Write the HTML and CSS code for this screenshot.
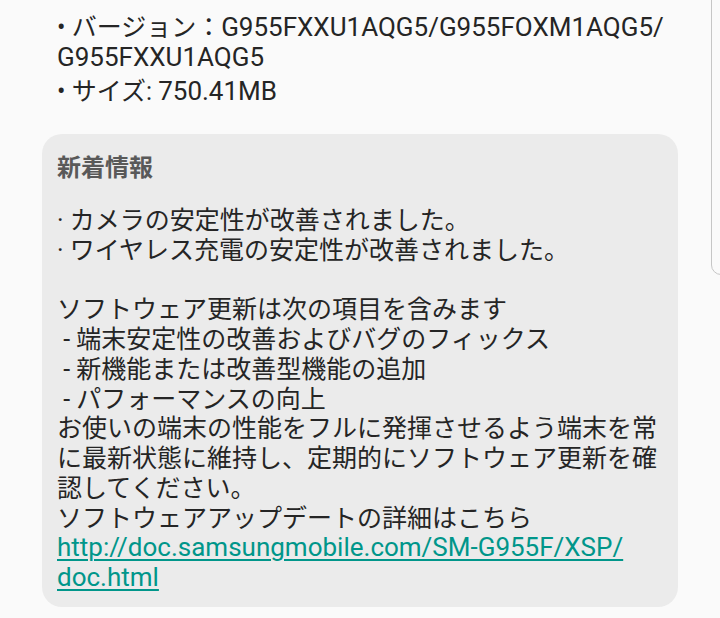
FILE: index.html
```html
<!DOCTYPE html>
<html lang="ja">
<head>
<meta charset="utf-8">
<link rel="stylesheet" href="styles.css">
</head>
<body>
<div class="page">
  <ul class="info">
    <li>• バージョン：<span class="en">G955FXXU1AQG5/<wbr>G955FOXM1AQG5/<wbr>G955FXXU1AQG5</span></li>
    <li>• サイズ: <span class="en">750.41MB</span></li>
  </ul>
  <section class="card">
    <h2 class="card-title">新着情報</h2>
    <div class="card-body">
      <p>· カメラの安定性が改善されました。<br>· ワイヤレス充電の安定性が改善されました。</p>
      <p>ソフトウェア更新は次の項目を含みます<br>&nbsp;- 端末安定性の改善およびバグのフィックス<br>&nbsp;- 新機能または改善型機能の追加<br>&nbsp;- パフォーマンスの向上<br>お使いの端末の性能をフルに発揮させるよう端末を常に最新状態に維持し、定期的にソフトウェア更新を確認してください。<br>ソフトウェアアップデートの詳細はこちら<br><a class="link en" href="#">http://doc.samsungmobile.com/SM-G955F/XSP/<wbr>doc.html</a></p>
    </div>
  </section>
</div>
<div class="scrollbar"></div>
</body>
</html>
```

FILE: styles.css
```css
html, body {
  margin: 0;
  padding: 0;
  background: #fafafa;
  overflow: hidden;
}
body {
  width: 720px;
  height: 618px;
  position: relative;
  font-family: Roboto, "Noto Sans CJK JP", sans-serif;
  color: #252525;
  font-size: 25px;
  line-height: 30px;
}
.page {
  padding: 13px 42px 0 42px;
}
.en {
  font-size: 26px;
  line-height: 1;
}
.info {
  list-style: none;
  margin: 0;
  padding: 0 0 0 15px;
  width: 625px;
}
.info li {
  margin-bottom: 4px;
}
.card {
  margin-top: 27px;
  background: #ebebeb;
  border-radius: 20px;
  padding: 19px 15px 14px 15px;
  width: 606px;
}
.card-title {
  margin: 0;
  font-size: 24px;
  font-weight: bold;
  color: #595959;
  line-height: 30px;
}
.card-body {
  margin-top: 23px;
  line-height: 29.75px;
}
.card-body p {
  margin: 0 0 29.75px 0;
}
.card-body p:last-child {
  margin-bottom: 0;
}
.link {
  color: #00968a;
  text-decoration: underline;
  text-underline-offset: 3px;
  text-decoration-thickness: 2px;
}
.scrollbar {
  position: absolute;
  left: 711px;
  top: -10px;
  width: 20px;
  height: 285px;
  border: 1px solid #c6c6c6;
  border-radius: 10px;
  box-sizing: border-box;
}
```
